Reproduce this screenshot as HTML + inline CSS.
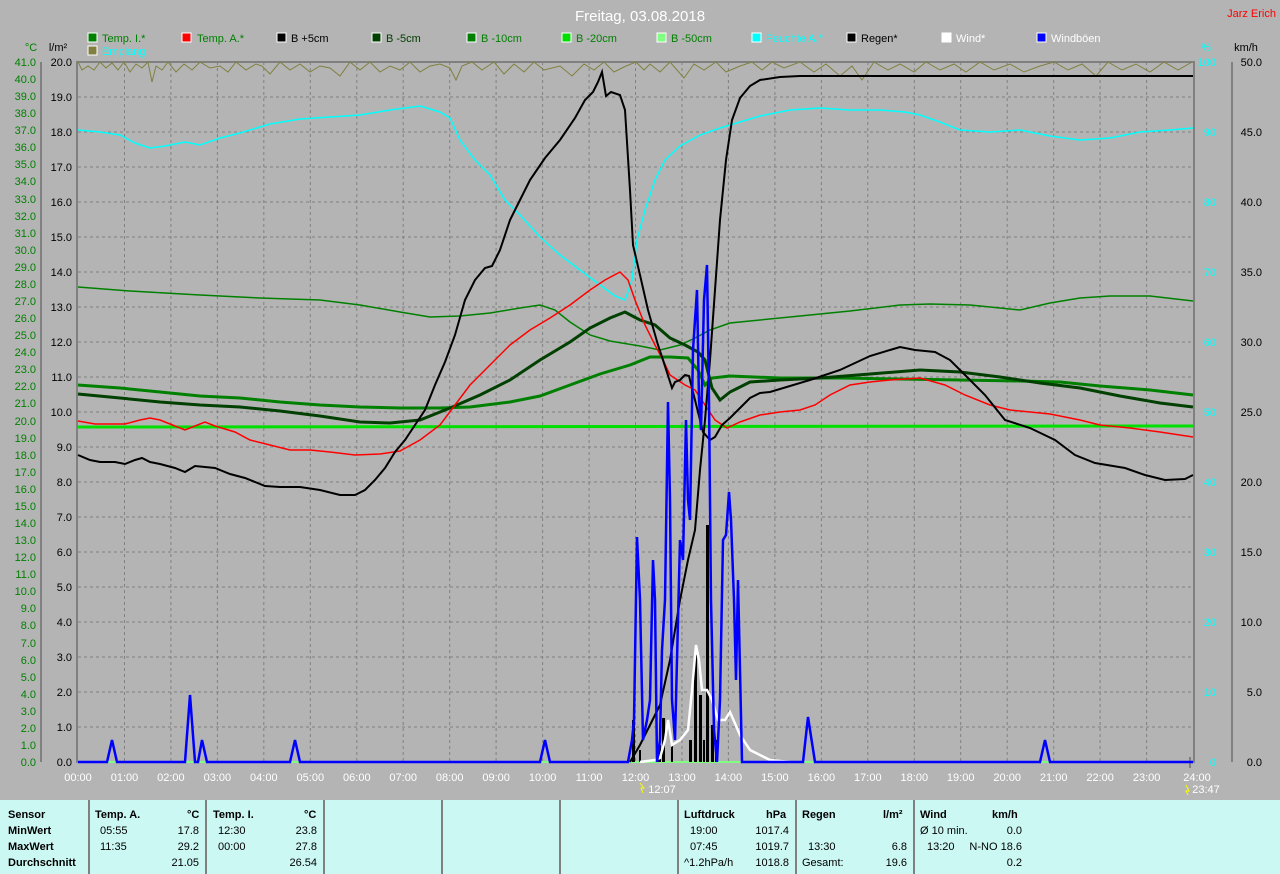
<!DOCTYPE html>
<html><head><meta charset="utf-8"><style>
html,body{margin:0;padding:0;background:#b4b4b4;}
body{width:1280px;height:874px;overflow:hidden;position:relative;font-family:"Liberation Sans",sans-serif;}
svg text{font-family:"Liberation Sans",sans-serif;font-size:11px;}
.tbl{position:absolute;left:0;top:800px;width:1280px;height:74px;background:#ccf8f4;font-size:11px;}
.col{position:absolute;top:0;height:74px;border-left:2px solid #808080;}
.r{position:absolute;white-space:nowrap;}
.b{font-weight:bold;}
</style></head><body>
<svg width="1280" height="800" style="position:absolute;left:0;top:0">
<text x="640" y="21" fill="#fff" font-size="15" text-anchor="middle" style="font-size:15px">Freitag, 03.08.2018</text>
<text x="1276" y="17" fill="#f00" text-anchor="end">Jarz Erich</text>
<!-- legend -->
<g stroke="#fff" stroke-width="1">
<rect x="88" y="33" width="9" height="9" fill="#008000"/>
<rect x="182" y="33" width="9" height="9" fill="#f00"/>
<rect x="277" y="33" width="9" height="9" fill="#000"/>
<rect x="372" y="33" width="9" height="9" fill="#004000"/>
<rect x="467" y="33" width="9" height="9" fill="#008000"/>
<rect x="562" y="33" width="9" height="9" fill="#00e000"/>
<rect x="657" y="33" width="9" height="9" fill="#80ff80"/>
<rect x="752" y="33" width="9" height="9" fill="#00ffff"/>
<rect x="847" y="33" width="9" height="9" fill="#000"/>
<rect x="942" y="33" width="9" height="9" fill="#fff"/>
<rect x="1037" y="33" width="9" height="9" fill="#00f"/>
<rect x="88" y="46" width="9" height="9" fill="#808040"/>
</g>
<g fill="#008000">
<text x="102" y="42">Temp. I.*</text><text x="197" y="42">Temp. A.*</text><text x="291" y="42" fill="#000">B +5cm</text>
<text x="386" y="42" fill="#004000">B -5cm</text><text x="481" y="42">B -10cm</text><text x="576" y="42">B -20cm</text><text x="671" y="42">B -50cm</text>
<text x="766" y="42" fill="#0ff">Feuchte A.*</text><text x="861" y="42" fill="#000">Regen*</text><text x="956" y="42" fill="#fff">Wind*</text><text x="1051" y="42" fill="#fff">Windböen</text>
<text x="102" y="55" fill="#0ff">Emplang</text>
</g>
<text x="31" y="51" fill="#008000" text-anchor="middle">°C</text>
<text x="58" y="51" fill="#000" text-anchor="middle">l/m²</text>
<text x="1206" y="51" fill="#0ff" text-anchor="middle">%</text>
<text x="1246" y="51" fill="#000" text-anchor="middle">km/h</text>
<!-- grid -->
<g stroke="#808080" stroke-dasharray="3,3" stroke-width="1">
<path d="M78 97H1193M78 132H1193M78 167H1193M78 202H1193M78 237H1193M78 272H1193M78 307H1193M78 342H1193M78 377H1193M78 412H1193M78 447H1193M78 482H1193M78 517H1193M78 552H1193M78 587H1193M78 622H1193M78 657H1193M78 692H1193M78 727H1193"/>
<path d="M124.5 62V762M170.9 62V762M217.4 62V762M263.8 62V762M310.3 62V762M356.8 62V762M403.2 62V762M449.7 62V762M496.1 62V762M542.6 62V762M589.1 62V762M635.5 62V762M682 62V762M728.4 62V762M774.9 62V762M821.4 62V762M867.8 62V762M914.3 62V762M960.7 62V762M1007.2 62V762M1053.7 62V762M1100.1 62V762M1146.6 62V762"/>
</g>
<g stroke="#808080" stroke-width="2" fill="none">
<path d="M77 62H1194M77 61V763M1194 61V763"/>
<path d="M41 62V762M1232 62V762"/>
<path d="M1190 757V768"/>
</g>
<!-- left labels -->
<g fill="#008000" text-anchor="end">
<text x="36" y="66">41.0</text><text x="36" y="83">40.0</text><text x="36" y="100">39.0</text><text x="36" y="117">38.0</text><text x="36" y="134">37.0</text><text x="36" y="151">36.0</text><text x="36" y="168">35.0</text><text x="36" y="185">34.0</text><text x="36" y="203">33.0</text><text x="36" y="220">32.0</text><text x="36" y="237">31.0</text><text x="36" y="254">30.0</text><text x="36" y="271">29.0</text><text x="36" y="288">28.0</text><text x="36" y="305">27.0</text><text x="36" y="322">26.0</text><text x="36" y="339">25.0</text><text x="36" y="356">24.0</text><text x="36" y="373">23.0</text><text x="36" y="390">22.0</text><text x="36" y="407">21.0</text><text x="36" y="425">20.0</text><text x="36" y="442">19.0</text><text x="36" y="459">18.0</text><text x="36" y="476">17.0</text><text x="36" y="493">16.0</text><text x="36" y="510">15.0</text><text x="36" y="527">14.0</text><text x="36" y="544">13.0</text><text x="36" y="561">12.0</text><text x="36" y="578">11.0</text><text x="36" y="595">10.0</text><text x="36" y="612">9.0</text><text x="36" y="629">8.0</text><text x="36" y="647">7.0</text><text x="36" y="664">6.0</text><text x="36" y="681">5.0</text><text x="36" y="698">4.0</text><text x="36" y="715">3.0</text><text x="36" y="732">2.0</text><text x="36" y="749">1.0</text><text x="36" y="766">0.0</text>
</g>
<g fill="#000" text-anchor="end">
<text x="72" y="66">20.0</text><text x="72" y="101">19.0</text><text x="72" y="136">18.0</text><text x="72" y="171">17.0</text><text x="72" y="206">16.0</text><text x="72" y="241">15.0</text><text x="72" y="276">14.0</text><text x="72" y="311">13.0</text><text x="72" y="346">12.0</text><text x="72" y="381">11.0</text><text x="72" y="416">10.0</text><text x="72" y="451">9.0</text><text x="72" y="486">8.0</text><text x="72" y="521">7.0</text><text x="72" y="556">6.0</text><text x="72" y="591">5.0</text><text x="72" y="626">4.0</text><text x="72" y="661">3.0</text><text x="72" y="696">2.0</text><text x="72" y="731">1.0</text><text x="72" y="766">0.0</text>
</g>
<g fill="#0ff" text-anchor="end">
<text x="1216" y="66">100</text><text x="1216" y="136">90</text><text x="1216" y="206">80</text><text x="1216" y="276">70</text><text x="1216" y="346">60</text><text x="1216" y="416">50</text><text x="1216" y="486">40</text><text x="1216" y="556">30</text><text x="1216" y="626">20</text><text x="1216" y="696">10</text><text x="1216" y="766">0</text>
</g>
<g fill="#000" text-anchor="end">
<text x="1262" y="66">50.0</text><text x="1262" y="136">45.0</text><text x="1262" y="206">40.0</text><text x="1262" y="276">35.0</text><text x="1262" y="346">30.0</text><text x="1262" y="416">25.0</text><text x="1262" y="486">20.0</text><text x="1262" y="556">15.0</text><text x="1262" y="626">10.0</text><text x="1262" y="696">5.0</text><text x="1262" y="766">0.0</text>
</g>
<g fill="#fff" text-anchor="middle">
<text x="78" y="781">00:00</text><text x="124.5" y="781">01:00</text><text x="170.9" y="781">02:00</text><text x="217.4" y="781">03:00</text><text x="263.8" y="781">04:00</text><text x="310.3" y="781">05:00</text><text x="356.8" y="781">06:00</text><text x="403.2" y="781">07:00</text><text x="449.7" y="781">08:00</text><text x="496.1" y="781">09:00</text><text x="542.6" y="781">10:00</text><text x="589.1" y="781">11:00</text><text x="635.5" y="781">12:00</text><text x="682" y="781">13:00</text><text x="728.4" y="781">14:00</text><text x="774.9" y="781">15:00</text><text x="821.4" y="781">16:00</text><text x="867.8" y="781">17:00</text><text x="914.3" y="781">18:00</text><text x="960.7" y="781">19:00</text><text x="1007.2" y="781">20:00</text><text x="1053.7" y="781">21:00</text><text x="1100.1" y="781">22:00</text><text x="1146.6" y="781">23:00</text><text x="1197" y="781">24:00</text>
<text x="662" y="793">12:07</text><text x="1206" y="793">23:47</text>
</g>
<path d="M640 783l4 5h-3l2 5" stroke="#ff0" fill="none"/>
<path d="M1186 785l3 6h-3l2 4" stroke="#ff0" fill="none"/>
<!-- curves -->
<polyline fill="none" stroke="#808040" points="78,62 82,70 88,66 94,70 100,62 106,68 112,63 118,70 124,62 130,72 136,64 142,68 148,62 152,82 156,66 162,70 168,62 176,72 184,64 192,70 200,62 210,68 220,66 228,72 236,62 246,70 256,64 262,66 270,74 280,62 290,70 300,64 310,72 320,66 330,68 340,76 350,62 360,70 370,62 380,72 390,66 400,70 410,62 420,72 430,66 440,64 450,68 456,80 462,66 472,62 482,70 494,62 504,74 514,64 524,72 534,62 544,70 560,66 572,76 584,64 594,70 604,62 614,72 626,66 636,62 644,70 650,64 660,72 670,62 684,78 694,64 704,70 716,62 726,72 740,66 752,62 762,70 772,62 784,68 800,62 814,72 826,64 840,76 852,66 862,80 874,62 888,70 900,64 914,72 926,62 940,70 954,64 966,72 980,62 994,70 1010,64 1024,72 1040,66 1054,62 1068,70 1082,64 1096,76 1108,62 1122,70 1136,64 1150,72 1164,62 1178,70 1192,62"/>
<polyline fill="none" stroke="#00ffff" stroke-width="1.5" points="78,130 100,132 120,135 135,143 150,148 165,146 185,142 200,145 220,138 240,133 270,124 300,119 330,117 360,115 390,110 420,106 440,112 450,118 460,140 475,160 490,175 505,200 520,215 540,237 560,255 580,270 600,285 615,296 625,300 632,280 637,240 645,210 655,180 665,160 680,146 700,135 720,128 740,122 760,116 790,110 820,108 850,110 880,110 905,112 920,115 940,122 960,130 990,132 1020,130 1050,136 1080,140 1110,138 1140,132 1170,130 1193,128"/>
<polyline fill="none" stroke="#008000" stroke-width="1.5" points="78,287 130,291 200,295 260,298 320,300 360,305 400,312 430,317 460,316 490,313 520,308 540,305 555,310 570,322 590,335 610,341 640,346 660,350 680,345 695,338 710,330 730,323 760,320 800,316 850,311 900,305 930,304 970,305 1000,308 1020,310 1050,303 1080,298 1110,296 1150,296 1193,301"/>
<polyline fill="none" stroke="#00e000" stroke-width="3" points="78,427 1193,426"/>
<polyline fill="none" stroke="#80ff80" stroke-width="2" points="78,762 1193,762"/>
<polyline fill="none" stroke="#008000" stroke-width="3" points="78,385 120,388 160,392 200,396 240,398 280,402 320,405 360,407 400,408 440,408 470,407 510,402 540,396 570,385 600,374 630,365 650,357 670,357 688,358 698,370 705,385 712,378 730,376 780,378 840,378 900,379 960,380 1020,381 1060,382 1100,386 1150,390 1193,395"/>
<polyline fill="none" stroke="#004000" stroke-width="3" points="78,394 120,398 160,402 200,405 240,407 280,411 320,416 360,422 390,423 420,420 450,408 480,395 510,380 540,360 570,342 590,328 610,318 625,312 640,320 655,325 670,338 685,345 698,352 705,360 712,388 720,400 730,392 750,382 780,380 820,378 870,374 920,370 960,372 1000,377 1040,383 1080,388 1120,396 1160,403 1193,407"/>
<polyline fill="none" stroke="#ff0000" stroke-width="1.5" points="78,421 95,424 110,424 125,424 140,420 150,418 160,420 175,426 185,430 195,426 205,422 215,426 235,432 250,440 270,445 290,450 310,450 330,452 355,455 380,454 400,451 420,440 440,425 455,405 470,385 490,365 510,345 530,330 550,318 570,305 590,290 605,280 620,272 628,280 635,300 645,325 655,345 663,360 670,375 685,385 695,390 705,405 715,420 727,428 740,422 760,415 780,412 800,410 815,405 830,395 850,385 870,382 890,380 920,378 945,385 965,395 990,405 1010,410 1030,412 1050,414 1080,420 1100,425 1130,428 1160,432 1193,437"/>
<polyline fill="none" stroke="#000" stroke-width="2" points="78,455 90,460 100,462 115,462 125,464 135,460 142,458 150,462 160,464 175,468 185,472 195,466 205,467 215,468 230,474 245,478 265,486 280,487 300,487 320,490 340,495 355,495 365,490 375,480 385,468 395,452 405,440 415,425 425,410 435,385 445,362 455,335 465,300 475,280 485,268 492,266 500,250 510,220 520,200 530,180 545,158 560,140 575,118 585,100 593,92 598,82 602,72 606,96 611,92 620,95 625,110 630,190 633,245 640,275 648,310 658,345 663,360 672,388 675,382 680,380 685,375 689,376 693,392 698,412 703,432 710,440 715,437 722,425 730,418 740,408 750,398 760,393 770,392 790,386 810,380 840,370 870,356 890,350 900,347 915,350 935,352 950,360 965,375 985,395 1005,420 1030,428 1055,440 1075,455 1095,463 1125,468 1145,475 1165,480 1185,479 1193,475"/>
<polyline fill="none" stroke="#000" stroke-width="2" points="630,762 640,745 650,725 660,705 670,660 680,600 688,560 695,530 700,470 705,420 710,360 715,290 720,220 726,160 732,120 740,98 750,86 760,80 780,77 800,76 1193,76"/>
<!-- rain bars -->
<g fill="#000">
<rect x="632" y="720" width="3" height="42"/><rect x="639" y="750" width="2" height="12"/><rect x="658" y="745" width="3" height="17"/><rect x="662" y="718" width="3" height="44"/><rect x="671" y="745" width="2" height="17"/><rect x="689" y="740" width="3" height="22"/><rect x="694" y="655" width="3" height="107"/><rect x="699" y="695" width="3" height="67"/><rect x="703" y="740" width="2" height="22"/><rect x="706" y="525" width="3" height="237"/><rect x="711" y="725" width="3" height="37"/><rect x="715" y="740" width="2" height="22"/>
</g>
<polyline fill="none" stroke="#fff" stroke-width="2.5" points="640,762 655,760 660,758 665,740 668,720 672,745 680,740 688,730 692,690 696,645 699,660 702,690 707,690 712,700 718,720 725,720 730,712 740,735 750,750 770,760 790,762"/>
<polyline fill="none" stroke="#0000ff" stroke-width="2.5" points="78,762 107,762 112,740 117,762 185,762 190,695 195,762 198,762 202,740 207,762 290,762 295,740 300,762 540,762 545,740 550,762 628,762 632,740 634,720 637,537 640,600 643,740 647,720 650,700 653,560 655,600 657,762 660,740 662,650 665,600 668,402 670,500 672,700 675,740 678,620 680,540 683,560 686,420 688,500 690,520 693,350 697,290 699,400 701,430 704,300 707,265 709,400 711,600 714,730 717,762 720,700 723,540 726,535 729,492 731,520 734,600 736,680 738,580 740,670 742,762 803,762 808,717 815,762 1040,762 1045,740 1050,762 1193,762"/>
</svg>
<div class="tbl">
<div class="col" style="left:88px"></div><div class="col" style="left:205px"></div><div class="col" style="left:323px"></div><div class="col" style="left:441px"></div><div class="col" style="left:559px"></div><div class="col" style="left:677px"></div><div class="col" style="left:795px"></div><div class="col" style="left:913px"></div>
<div class="r b" style="left:8px;top:9px">Sensor</div><div class="r b" style="left:8px;top:25px">MinWert</div><div class="r b" style="left:8px;top:41px">MaxWert</div><div class="r b" style="left:8px;top:57px">Durchschnitt</div>
<div class="r b" style="left:95px;top:9px">Temp. A.</div><div class="r b" style="left:187px;top:9px">°C</div>
<div class="r" style="left:100px;top:25px">05:55</div><div class="r" style="right:1081px;top:25px">17.8</div>
<div class="r" style="left:100px;top:41px">11:35</div><div class="r" style="right:1081px;top:41px">29.2</div>
<div class="r" style="right:1081px;top:57px">21.05</div>
<div class="r b" style="left:213px;top:9px">Temp. I.</div><div class="r b" style="left:304px;top:9px">°C</div>
<div class="r" style="left:218px;top:25px">12:30</div><div class="r" style="right:963px;top:25px">23.8</div>
<div class="r" style="left:218px;top:41px">00:00</div><div class="r" style="right:963px;top:41px">27.8</div>
<div class="r" style="right:963px;top:57px">26.54</div>
<div class="r b" style="left:684px;top:9px">Luftdruck</div><div class="r b" style="left:766px;top:9px">hPa</div>
<div class="r" style="left:690px;top:25px">19:00</div><div class="r" style="right:491px;top:25px">1017.4</div>
<div class="r" style="left:690px;top:41px">07:45</div><div class="r" style="right:491px;top:41px">1019.7</div>
<div class="r" style="left:684px;top:57px">^1.2hPa/h</div><div class="r" style="right:491px;top:57px">1018.8</div>
<div class="r b" style="left:802px;top:9px">Regen</div><div class="r b" style="left:883px;top:9px">l/m²</div>
<div class="r" style="left:808px;top:41px">13:30</div><div class="r" style="right:373px;top:41px">6.8</div>
<div class="r" style="left:802px;top:57px">Gesamt:</div><div class="r" style="right:373px;top:57px">19.6</div>
<div class="r b" style="left:920px;top:9px">Wind</div><div class="r b" style="left:992px;top:9px">km/h</div>
<div class="r" style="left:920px;top:25px">Ø 10 min.</div><div class="r" style="right:258px;top:25px">0.0</div>
<div class="r" style="left:927px;top:41px">13:20</div><div class="r" style="right:258px;top:41px">N-NO 18.6</div>
<div class="r" style="right:258px;top:57px">0.2</div>
</div>
</body></html>
